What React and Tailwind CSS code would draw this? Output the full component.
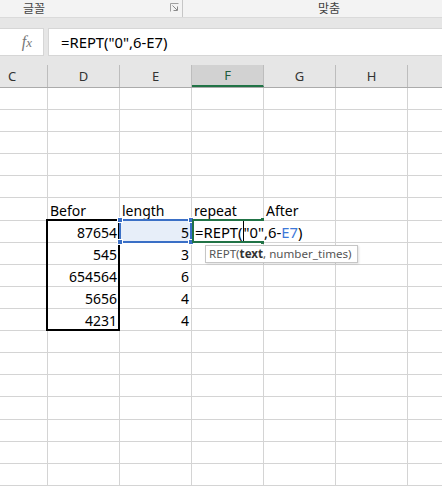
import React from "react";

const COLS = [
  { key: "C", w: 48 },
  { key: "D", w: 72 },
  { key: "E", w: 72 },
  { key: "F", w: 72 },
  { key: "G", w: 72 },
  { key: "H", w: 72 },
  { key: "I", w: 34 },
];

const ROW_H = [22, 22, 22, 22, 22, 23, 22, 22, 22, 22, 22, 22, 22, 22, 23, 22, 22, 22];

const DATA = {
  5: { D: ["Befor", "l"], E: ["length", "l"], F: ["repeat", "l"], G: ["After", "l"] },
  6: { D: ["87654", "r"], E: ["5", "r"] },
  7: { D: ["545", "r"], E: ["3", "r"] },
  8: { D: ["654564", "r"], E: ["6", "r"] },
  9: { D: ["5656", "r"], E: ["4", "r"] },
  10: { D: ["4231", "r"], E: ["4", "r"] },
};

function Launcher() {
  return (
    <svg width="9" height="9" viewBox="0 0 9 9" className="block">
      <path d="M0.5 8.5 V0.5 H8.5" fill="none" stroke="#a0a0a0" strokeWidth="1" />
      <path d="M2.5 2.5 L7 7" stroke="#8a8a8a" strokeWidth="1" />
      <path d="M7.5 3.5 V7.5 H3.5" fill="none" stroke="#8a8a8a" strokeWidth="1" />
    </svg>
  );
}

function Handle({ left, top }) {
  return (
    <div
      className="absolute w-[6px] h-[6px] bg-[#3a6fc6] border border-white"
      style={{ left: left - 3, top: top - 3 }}
    />
  );
}

export default function App() {
  return (
    <div className="w-[442px] h-[486px] overflow-hidden bg-white font-['Noto_Sans',sans-serif] text-black">
      {/* ribbon labels */}
      <div className="h-[18px] bg-[#f3f3f3] border-b border-[#dadada] flex text-[12px] leading-none text-[#444] font-['Noto_Sans_CJK_KR',sans-serif]">
        <div className="w-[183px] border-r border-[#c6c6c6] flex items-center pl-[23px] pr-[3px]">
          <span className="-mt-[1px]">글꼴</span>
          <span className="ml-auto -mt-[3px]">
            <Launcher />
          </span>
        </div>
        <div className="flex-1 flex items-center pl-[135px]">
          <span className="-mt-[1px]">맞춤</span>
        </div>
      </div>

      {/* formula bar */}
      <div className="bg-[#e6e6e6] pt-[10px] pb-[9px] flex gap-[4px]">
        <div className="w-[44px] h-[28px] bg-white border-y border-r border-[#d6d6d6] flex items-center justify-end pr-[11px]">
          <span className="font-['Liberation_Serif',serif] italic text-[16px] text-[#777] leading-none">
            f<span className="text-[13px]">x</span>
          </span>
        </div>
        <div className="flex-1 h-[28px] bg-white border-y border-l border-[#d6d6d6] flex items-center pl-[12px] text-[14.8px] leading-none">
          =REPT("0",6-E7)
        </div>
      </div>

      {/* column headers */}
      <div className="h-[23px] flex bg-[#e6e6e6] border-b border-[#ababab] text-[13px] leading-none text-[#333]">
        {COLS.map((c) => (
          <div
            key={c.key}
            style={{ width: c.w }}
            className={
              c.key === "C"
                ? "h-full shrink-0 border-r border-[#bdbdbd] flex items-center pl-[8px]"
                : c.key === "F"
                ? "h-full shrink-0 border-r border-[#bdbdbd] flex items-center justify-center bg-[#d2d2d2] text-[#225c3c] border-b-2 border-b-[#217346] -mb-px h-[23px]"
                : c.key === "I"
                ? "h-full shrink-0 flex items-center justify-center"
                : "h-full shrink-0 border-r border-[#bdbdbd] flex items-center justify-center"
            }
          >
            {c.key === "I" ? "" : c.key}
          </div>
        ))}
      </div>

      {/* grid */}
      <div className="relative">
        {ROW_H.map((h, ri) => (
          <div key={ri} className="flex border-b border-[#d4d4d4]" style={{ height: h }}>
            {COLS.map((c) => {
              const cell = DATA[ri] && DATA[ri][c.key];
              const sel = ri === 6 && c.key === "E";
              return (
                <div
                  key={c.key}
                  style={{ width: c.w }}
                  className={
                    (c.key === "I" ? "" : "border-r border-[#d4d4d4] ") +
                    "shrink-0 h-full flex items-end text-[14px] leading-[19px] " +
                    (cell && cell[1] === "r" ? "justify-end pr-[2px] " : "pl-[2px] ") +
                    (sel ? "bg-[#e7eef9]" : "")
                  }
                >
                  {cell ? cell[0] : ""}
                </div>
              );
            })}
          </div>
        ))}

        {/* black range border D7:D11 */}
        <div className="absolute left-[46px] top-[131px] w-[74px] h-[112px] border-2 border-black" />

        {/* selection E7 */}
        <div className="absolute left-[119px] top-[131px] w-[73px] h-[24px] border-2 border-[#3a6fc6]" />
        <Handle left={120} top={132} />
        <Handle left={191} top={132} />
        <Handle left={120} top={154} />
        <Handle left={191} top={154} />

        {/* edit text in F7 */}
        <div className="absolute left-[194px] top-[133px] h-[21px] w-[112px] bg-white flex items-end text-[14.8px] leading-[19px] whitespace-nowrap pl-[1px]">
          <span>=REPT(</span>
          <span className="inline-block w-px h-[21px] bg-black self-center" />
          <span>"0",6-</span>
          <span className="text-[#3d78d8]">E7</span>
          <span>)</span>
        </div>
        {/* editing green border */}
        <div className="absolute left-[192px] top-[131px] w-[72px] h-[24px] border-t-2 border-b-2 border-l-2 border-[#217346]" />
        <div className="absolute left-[261px] top-[130px] w-[3px] h-[3px] bg-[#217346]" />
        <div className="absolute left-[261px] top-[153px] w-[3px] h-[3px] bg-[#217346]" />

        {/* tooltip */}
        <div className="absolute left-[205px] top-[157px] w-[153px] h-[18px] bg-white border border-[#c6c6c6] shadow-[1px_1px_2px_rgba(0,0,0,0.12)] flex items-center pl-[3px] text-[11.6px] leading-none text-[#555] whitespace-nowrap">
          REPT(<span className="font-bold text-[#333]">text</span>, number_times)
        </div>
      </div>
    </div>
  );
}
